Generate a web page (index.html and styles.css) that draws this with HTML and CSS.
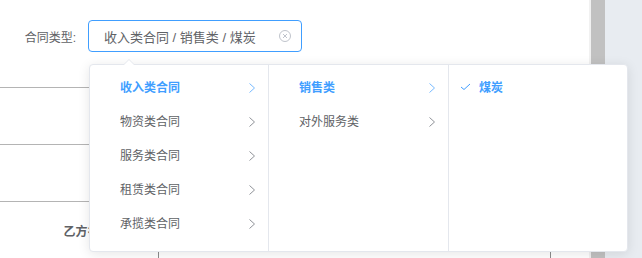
FILE: index.html
```html
<!DOCTYPE html>
<html lang="zh-CN">
<head>
  <meta charset="UTF-8" />
  <title>合同类型</title>
  <link rel="stylesheet" href="styles.css">
</head>
<body>
  <div class="page">
    <div class="main">
      <div class="form-row">
        <label class="form-label">合同类型:</label>
        <div class="cascader-input">
          <span class="cascader-text">收入类合同 / 销售类 / 煤炭</span>
          <svg class="clear-icon" width="14" height="14" viewBox="0 0 14 14">
            <circle cx="7" cy="7" r="5.5" fill="none" stroke="#c0c4cc" stroke-width="1"/>
            <path d="M5 5 L9 9 M9 5 L5 9" stroke="#c0c4cc" stroke-width="1" fill="none"/>
          </svg>
        </div>
      </div>

      <table class="info-table">
        <tr><td class="cell-label"></td><td class="cell-value"></td><td class="cell-rest"></td></tr>
        <tr><td class="cell-label"></td><td class="cell-value"></td><td class="cell-rest"></td></tr>
        <tr><td class="cell-label">乙方名称：</td><td class="cell-value"></td><td class="cell-rest"></td></tr>
        <tr><td class="cell-label"></td><td class="cell-value"></td><td class="cell-rest"></td></tr>
      </table>

      <!-- cascader dropdown -->
      <div class="cascader-panel">
        <div class="popper-arrow"></div>
        <ul class="cascader-menu col-1">
          <li class="node active"><span class="node-label">收入类合同</span><svg class="node-arrow" width="12" height="12" viewBox="0 0 12 12"><path d="M3.5 1.5 L8.5 6 L3.5 10.5" fill="none" stroke="#79bbff" stroke-width="1"/></svg></li>
          <li class="node"><span class="node-label">物资类合同</span><svg class="node-arrow" width="12" height="12" viewBox="0 0 12 12"><path d="M3.5 1.5 L8.5 6 L3.5 10.5" fill="none" stroke="#909399" stroke-width="1"/></svg></li>
          <li class="node"><span class="node-label">服务类合同</span><svg class="node-arrow" width="12" height="12" viewBox="0 0 12 12"><path d="M3.5 1.5 L8.5 6 L3.5 10.5" fill="none" stroke="#909399" stroke-width="1"/></svg></li>
          <li class="node"><span class="node-label">租赁类合同</span><svg class="node-arrow" width="12" height="12" viewBox="0 0 12 12"><path d="M3.5 1.5 L8.5 6 L3.5 10.5" fill="none" stroke="#909399" stroke-width="1"/></svg></li>
          <li class="node"><span class="node-label">承揽类合同</span><svg class="node-arrow" width="12" height="12" viewBox="0 0 12 12"><path d="M3.5 1.5 L8.5 6 L3.5 10.5" fill="none" stroke="#909399" stroke-width="1"/></svg></li>
        </ul>
        <ul class="cascader-menu col-2">
          <li class="node active"><span class="node-label">销售类</span><svg class="node-arrow" width="12" height="12" viewBox="0 0 12 12"><path d="M3.5 1.5 L8.5 6 L3.5 10.5" fill="none" stroke="#79bbff" stroke-width="1"/></svg></li>
          <li class="node"><span class="node-label">对外服务类</span><svg class="node-arrow" width="12" height="12" viewBox="0 0 12 12"><path d="M3.5 1.5 L8.5 6 L3.5 10.5" fill="none" stroke="#909399" stroke-width="1"/></svg></li>
        </ul>
        <ul class="cascader-menu col-3">
          <li class="node active"><svg class="node-check" width="12" height="12" viewBox="0 0 12 12"><path d="M2 6 L5 8.5 L11 3" fill="none" stroke="#409eff" stroke-width="1"/></svg><span class="node-label">煤炭</span></li>
        </ul>
      </div>
    </div>
    <div class="scrollbar"><div class="scroll-thumb"></div></div>
    <div class="aside"></div>
  </div>
</body>
</html>
```

FILE: styles.css
```css
* {
  box-sizing: border-box;
}
body {
  margin: 0;
  font-family: "Helvetica Neue", "Liberation Sans", "Noto Sans CJK SC", sans-serif;
  color: #606266;
  background: #fff;
}
.page {
  display: flex;
  height: 258px;
  overflow: hidden;
}
.main {
  position: relative;
  width: 589px;
  background: #fff;
}
.scrollbar {
  width: 16px;
  background: #f1f1f1;
  padding-left: 2px;
}
.scroll-thumb {
  width: 14px;
  height: 100%;
  background: #c1c1c1;
}
.aside {
  flex: 1;
  background: #e8ecf1;
}

.form-row {
  display: flex;
  align-items: center;
  padding-top: 20px;
}
.form-label {
  width: 88px;
  padding-right: 12px;
  text-align: right;
  font-size: 12px;
  color: #606266;
}
.cascader-input {
  display: flex;
  align-items: center;
  justify-content: space-between;
  width: 214px;
  height: 32px;
  padding: 0 9px 0 15px;
  border: 1px solid #409eff;
  border-radius: 4px;
  font-size: 13px;
  color: #606266;
}

.info-table {
  margin-top: 35px;
  width: 100%;
  border-collapse: collapse;
}
.info-table td {
  height: 57px;
  border-top: 1px solid #b4b4b4;
  padding: 0;
}
.cell-label {
  width: 158px;
  border-right: 1px solid #8c8c8c;
  text-align: right;
  padding-right: 34px !important;
  font-size: 12px;
  font-weight: bold;
  color: #606266;
}
.cell-value {
  width: 392px;
  border-right: 1px solid #8c8c8c;
}

.cascader-panel {
  position: absolute;
  left: 89px;
  top: 64px;
  display: flex;
  background: #fff;
  border: 1px solid #e4e7ed;
  border-radius: 4px;
  box-shadow: 0 2px 12px 0 rgba(0, 0, 0, 0.1);
}
.popper-arrow,
.popper-arrow::after {
  position: absolute;
  width: 0;
  height: 0;
  border: 6px solid transparent;
}
.popper-arrow {
  top: -6px;
  left: 33px;
  border-top-width: 0;
  border-bottom-color: #e4e7ed;
}
.popper-arrow::after {
  content: "";
  top: 1px;
  left: -6px;
  border-top-width: 0;
  border-bottom-color: #fff;
}
.cascader-menu {
  list-style: none;
  margin: 0;
  padding: 6px 0;
  height: 186px;
  border-right: 1px solid #e4e7ed;
}
.col-1 { width: 179px; }
.col-2 { width: 180px; }
.col-3 { width: 178px; border-right: none; }
.node {
  position: relative;
  height: 34px;
  line-height: 34px;
  padding: 0 30px 0 20px;
  font-size: 12px;
  color: #606266;
}
.node-label {
  padding: 0 10px;
}
.node.active {
  color: #409eff;
  font-weight: bold;
}
.node-arrow {
  position: absolute;
  right: 10px;
  top: 11px;
}
.node-check {
  position: absolute;
  left: 10px;
  top: 10px;
}
```
